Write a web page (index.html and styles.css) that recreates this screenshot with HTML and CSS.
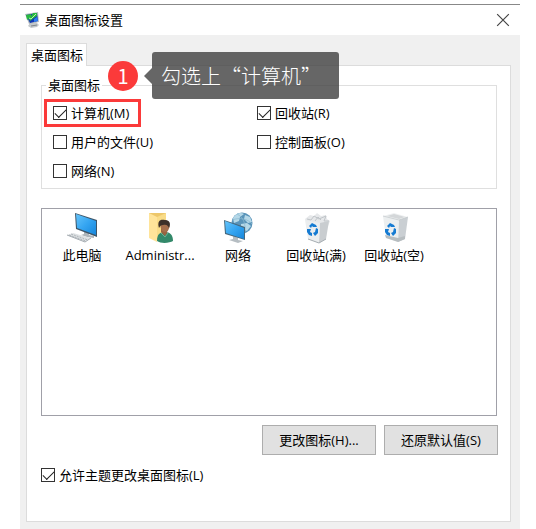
FILE: index.html
```html
<!DOCTYPE html>
<html lang="zh-CN">
<head>
<meta charset="utf-8">
<title>桌面图标设置</title>
<link rel="stylesheet" href="styles.css">
</head>
<body>
<main class="window">
  <header class="titlebar">
    <svg class="title-icon" viewBox="0 0 16 18" aria-hidden="true">
      <path d="M5 12l6-1 3 3-2 2-6 1-3-2z" fill="#c3c8cb"/>
      <path d="M6 15l6-1" stroke="#80878c" fill="none"/>
      <path d="M0 3l13-2 1 10-10 2z" fill="#b5bcc0"/>
      <path d="M1 4l11-2 1 8-8 2z" fill="#1238b4"/>
      <path d="M1 4l5-1 0 3-4 3zM8 2l4 0 0 3-3 2-4 3-1-2z" fill="#28b840"/>
      <path d="M4 7l2 1 5-5" stroke="#b8f0b0" fill="none"/>
      <path d="M9 8l3-2 1 4-4 1z" fill="#2d7ef0"/>
    </svg>
    <h1 class="title">桌面图标设置</h1>
    <button class="close" type="button" aria-label="关闭">
      <svg viewBox="0 0 12 12" aria-hidden="true"><path d="M1 1l10 10M11 1L1 11" stroke="#444" fill="none"/></svg>
    </button>
  </header>
  <div class="content">
    <div class="tabs" role="tablist">
      <button class="tab" type="button" role="tab" aria-selected="true">桌面图标</button>
    </div>
    <section class="panel" role="tabpanel">
      <fieldset class="group">
        <legend>桌面图标</legend>
        <div class="options">
          <label class="check marked"><input type="checkbox" checked>计算机(M)</label>
          <label class="check"><input type="checkbox" checked>回收站(R)</label>
          <label class="check"><input type="checkbox">用户的文件(U)</label>
          <label class="check"><input type="checkbox">控制面板(O)</label>
          <label class="check"><input type="checkbox">网络(N)</label>
        </div>
      </fieldset>
      <ul class="icons">
        <li>
          <svg viewBox="0 0 32 32" aria-hidden="true">
            <defs><linearGradient id="screen" x1="0" y1="0" x2="1" y2="1"><stop offset="0" stop-color="#65c4fa"/><stop offset=".5" stop-color="#35a5f1"/><stop offset="1" stop-color="#1686db"/></linearGradient></defs>
            <path d="M17 19l5 2v2l5 1v2l-7-1-6-2 3-1z" fill="#aeb5ba"/>
            <path d="M8 1l22 7v17L9 17z" fill="#3d5568"/>
            <path d="M9 2l20 7v14l-19-7z" fill="url(#screen)"/>
            <path d="M0 23l6-2 18 5-6 4z" fill="#dfe2e4"/>
            <path d="M0 23l18 7 6-4" stroke="#a6adb2" fill="none"/>
            <path d="M4 22l17 6M2 23l17 6" stroke="#9aa2a8" stroke-width=".7" stroke-dasharray="2 1" fill="none"/>
          </svg>
          <span>此电脑</span>
        </li>
        <li>
          <svg viewBox="0 0 32 32" aria-hidden="true">
            <path d="M4 1h17v26H7z" fill="#edc76a"/>
            <path d="M4 1l8 4v25l-8-4z" fill="#ffe49a"/>
            <path d="M12 5l9-4v26H12z" fill="#f9dc88"/>
            <path d="M12 29c0-7 3-9 8-9s8 3 8 9c-3 2-12 3-16 0z" fill="#33896a"/>
            <path d="M16 16h7l-1 5-2 3-4-4z" fill="#996341"/>
            <ellipse cx="20" cy="14" rx="4.500" ry="6" fill="#a66f4c"/>
            <path d="M14 16c-2-7 1-9 6-8 5 0 6 4 4 8-1-2-2-4-6-3-2 0-3 1-4 3z" fill="#3d3029"/>
            <path d="M16 21l4 4 3-4" stroke="#6bb294" fill="none"/>
          </svg>
          <span>Administr...</span>
        </li>
        <li>
          <svg viewBox="0 0 32 32" aria-hidden="true">
            <circle cx="19" cy="11" r="10.500" fill="#5a94b9"/>
            <path d="M10 6c3-5 8-6 11-4l-4 3-1 4-5 2zM22 3l5 2 2 5-4 1-4-4zM18 12l6-1 4 3-4 5-6-2z" fill="#b5d8e8"/>
            <path d="M14 2c6 3 9 9 8 19M9 8c8-3 16-1 20 4" stroke="#8bb9d0" stroke-width=".7" fill="none"/>
            <path d="M10 24l5 2v2l5 1-5 2-9-3 4-1z" fill="#b5bdc2"/>
            <path d="M1 8l21 7v13L2 22z" fill="#46687d"/>
            <path d="M2 9l19 7v11L3 21z" fill="url(#screen)"/>
          </svg>
          <span>网络</span>
        </li>
        <li>
          <svg viewBox="0 0 32 32" aria-hidden="true">
            <path d="M4 7l5-4 4 1 3-3 4 3 5-1 1 4 3 2-2 5H7z" fill="#e6e8ea"/>
            <path d="M6 7l4 1 3-4 5 3 7-3-2 5 5 0M14 9l3-4 3 3" stroke="#c0c5c9" fill="none"/>
            <path d="M4 8l15 3-1 20-11-4z" fill="#eceeef"/>
            <path d="M19 11l9-2-3 18-7 4z" fill="#c9cdd0"/>
            <path d="M7 27l11 4 7-4" stroke="#a6adb2" fill="none"/>
            <g id="recycle" fill="#167bd2"><path d="M8 14l3-3 4 2 1 2-4 0-1-1-1 2z"/><path d="M15 16l2 1 0 4-3 3-2-3 2-1z"/><path d="M6 17l4 0-1 3 2 1 0 3-3-1-2-3z"/></g>
          </svg>
          <span>回收站(满)</span>
        </li>
        <li>
          <svg viewBox="0 0 32 32" aria-hidden="true">
            <path d="M4 4l11-3 14 4-9 4z" fill="#eef0f1"/>
            <path d="M8 4l7-2 11 3-6 2z" fill="#d4d7d9"/>
            <path d="M4 4l16 4-1 22-12-4z" fill="#eceff0"/>
            <path d="M20 8l9-3-3 22-7 3z" fill="#cacfd3"/>
            <path d="M6 23l13 3 7-2v3l-7 3-12-4z" fill="#b7bdc0"/>
            <path d="M4 4l16 4 9-3" stroke="#c0c5c8" stroke-width=".7" fill="none"/>
            <use href="#recycle"/>
          </svg>
          <span>回收站(空)</span>
        </li>
      </ul>
      <div class="actions">
        <button type="button">更改图标(H)...</button>
        <button type="button">还原默认值(S)</button>
      </div>
      <label class="check themes"><input type="checkbox" checked>允许主题更改桌面图标(L)</label>
    </section>
    <aside class="callout">
      <span class="step">1</span>
      <p class="tip">勾选上“计算机”</p>
    </aside>
  </div>
</main>
</body>
</html>
```

FILE: styles.css
```css
* { box-sizing: border-box; }

body {
  margin: 0;
  padding: 4px 16px 0 20px;
  background: #fff;
  color: #000;
  font: 13px/18px "Open Sans", "Noto Sans CJK SC", sans-serif;
}

button { font: inherit; color: inherit; }

.window {
  display: flex;
  flex-direction: column;
  min-height: calc(100vh - 4px);
  border-top: 1px solid #888;
  background: #f0f0f0;
}

.titlebar {
  display: flex;
  align-items: center;
  height: 30px;
  padding: 0 10px 0 5px;
  background: #fff;
}

.title-icon { width: 16px; height: 18px; }

.title {
  flex: 1;
  margin: 0 0 0 4px;
  font-size: 13px;
  font-weight: 400;
}

.close {
  display: flex;
  padding: 0;
  border: 0;
  background: none;
}

.close svg { width: 14px; height: 14px; }

.content {
  position: relative;
  display: flex;
  flex: 1;
  flex-direction: column;
  padding: 8px 9px 7px 6px;
}

.tabs { display: flex; }

.tab {
  height: 23px;
  margin-bottom: -1px;
  padding: 0 3px 0 4px;
  border: 1px solid #dcdcdc;
  border-bottom: 0;
  background: #fff;
  z-index: 1;
}

.panel {
  flex: 1;
  padding: 10px 13px 12px 14px;
  border: 1px solid #dcdcdc;
  background: #fff;
}

.group {
  margin: 0;
  padding: 5px 8px 3px 2px;
  border: 1px solid #dfdfdf;
}

.group legend {
  padding: 0 2px;
  margin-left: 2px;
}

.options {
  display: grid;
  grid-template-columns: 204fr 240fr;
  row-gap: 1px;
}

.check {
  display: flex;
  align-items: center;
  justify-self: start;
  gap: 4px;
  height: 28px;
  padding: 0 9px;
}

.marked {
  padding: 0 9px 0 6px;
  border: 3px solid #fb3a3a;
}

.check input {
  flex: none;
  width: 14px;
  height: 14px;
  margin: 0;
  appearance: none;
  border: 1px solid #333;
  background: #fff;
}

.check input:checked::before {
  content: "";
  display: block;
  width: 10px;
  height: 5px;
  margin: 2px 0 0 1px;
  border: solid #222;
  border-width: 0 0 1px 1px;
  transform: rotate(-45deg);
}

.icons {
  display: flex;
  min-height: 208px;
  margin: 19px 0 0;
  padding: 3px 1px;
  border: 1px solid #a0a0a8;
  list-style: none;
}

.icons li {
  display: flex;
  flex-direction: column;
  align-items: center;
  width: 78px;
  white-space: nowrap;
}

.icons svg { width: 32px; height: 32px; margin-left: 2px; }

.icons span { margin-top: 2px; }

.actions {
  display: flex;
  justify-content: flex-end;
  gap: 8px;
  margin: 9px -1px 0 0;
}

.actions button {
  width: 114px;
  height: 30px;
  padding: 0;
  border: 1px solid #adadad;
  background: #e1e1e1;
}

.themes {
  margin-top: 6px;
  padding: 0;
}

.callout {
  position: absolute;
  top: 17px;
  left: 88px;
  display: flex;
  align-items: center;
  color: #fff;
  font-family: "Noto Sans CJK SC", sans-serif;
  font-size: 20px;
  font-weight: 300;
  line-height: 27px;
}

.step {
  width: 30px;
  border-radius: 50%;
  background: #fb3a3a;
  font-weight: 400;
  line-height: 30px;
  text-align: center;
}

.tip {
  position: relative;
  margin: 0 0 0 14px;
  padding: 10px 18px 10px 9px;
  border-radius: 3px;
  background: rgba(64, 64, 64, .8);
}

.tip::before {
  content: "";
  position: absolute;
  top: 16px;
  right: 100%;
  border: solid transparent;
  border-width: 8px 8px 8px 0;
  border-right-color: rgba(64, 64, 64, .8);
}
```
